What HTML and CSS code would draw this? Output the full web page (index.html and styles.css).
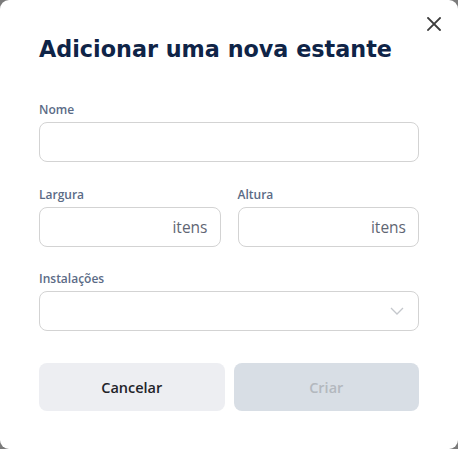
FILE: index.html
```html
<!DOCTYPE html>
<html lang="pt">
<head>
<meta charset="utf-8">
<link rel="stylesheet" href="styles.css">
</head>
<body>
<div class="backdrop">
  <div class="dialog">
    <button class="close" aria-label="Fechar">
      <svg width="14" height="14" viewBox="0 0 14 14"><path d="M1 1L13 13M13 1L1 13" stroke="#3d3d3d" stroke-width="1.8" stroke-linecap="square"/></svg>
    </button>
    <h1 class="title">Adicionar uma nova estante</h1>
    <div class="field">
      <label class="label">Nome</label>
      <div class="input"></div>
    </div>
    <div class="row">
      <div class="field">
        <label class="label">Largura</label>
        <div class="input suffix"><span>itens</span></div>
      </div>
      <div class="field">
        <label class="label">Altura</label>
        <div class="input suffix"><span>itens</span></div>
      </div>
    </div>
    <div class="field last">
      <label class="label">Instalações</label>
      <div class="input select">
        <svg width="14" height="8" viewBox="0 0 14 8"><path d="M1 1L7 7L13 1" fill="none" stroke="#c4c7cc" stroke-width="1.3"/></svg>
      </div>
    </div>
    <div class="actions">
      <button class="btn cancel">Cancelar</button>
      <button class="btn create">Criar</button>
    </div>
  </div>
</div>
</body>
</html>
```
FILE: styles.css
```css
html, body { margin: 0; padding: 0; }
body { background: #7b7b7b; font-family: "Open Sans", sans-serif; }
.backdrop { width: 458px; height: 449px; }
.dialog {
  position: relative;
  box-sizing: border-box;
  width: 458px; height: 449px;
  background: #fff;
  border-radius: 9px;
  padding: 35px 39px 0 39px;
}
.close {
  position: absolute; top: 17px; right: 17px;
  border: 0; background: none; padding: 0; width: 14px; height: 14px;
  display: flex;
}
.title {
  margin: 0 0 40px 0;
  font-family: "DejaVu Sans", sans-serif;
  font-size: 22.3px; font-weight: 700; color: #0f2447;
  line-height: 28px;
}
.field { display: flex; flex-direction: column; margin-bottom: 26px; }
.row .field { margin-bottom: 25px; }
.field.last { margin-bottom: 32px; }
.label { display: block; height: 14px; font-size: 12px; font-weight: 600; color: #5b6b86; line-height: 14px; margin-bottom: 5px; }
.input {
  box-sizing: border-box; height: 40px; flex: none;
  border: 1px solid #d3d3d3; border-radius: 8px; background: #fff;
  display: flex; align-items: center; justify-content: flex-end; padding: 0 12px;
}
.suffix span { font-size: 15.5px; line-height: 20px; color: #5f6673; }
.select { padding-right: 14px; }
.row { display: grid; grid-template-columns: 1fr 1fr; column-gap: 17px; }
.actions { display: grid; grid-template-columns: 1fr 1fr; column-gap: 9px; }
.btn {
  height: 48px; border: 0; border-radius: 8px;
  font-family: inherit; font-size: 14.5px; font-weight: 600;
}
.cancel { background: #edeef2; color: #1f2329; }
.create { background: #d8dee5; color: #b3b8be; }
```
